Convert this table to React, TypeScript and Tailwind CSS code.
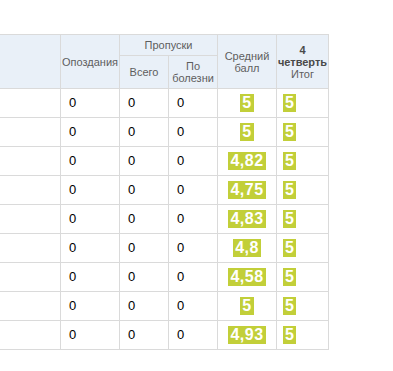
import React from "react";

const rows = [
  { avg: "5", fin: "5" },
  { avg: "5", fin: "5" },
  { avg: "4,82", fin: "5" },
  { avg: "4,75", fin: "5" },
  { avg: "4,83", fin: "5" },
  { avg: "4,8", fin: "5" },
  { avg: "4,58", fin: "5" },
  { avg: "5", fin: "5" },
  { avg: "4,93", fin: "5" },
];

const font = { fontFamily: '"Liberation Sans", Arial, sans-serif' };

function Badge({ v }: { v: string }) {
  return (
    <span className="inline-block bg-[#c2cf39] px-[2px] text-[16px] font-bold leading-[18px] tracking-[0.5px] text-white">
      {v}
    </span>
  );
}

export default function App() {
  const b = "border-[#dadada]";
  return (
    <div className="h-[371px] w-[393px] bg-white pt-[34px]" style={font}>
      <div className={`w-[329px] border-t ${b}`}>
        <div className="grid grid-cols-[61px_59px_49px_49px_59px_52px] grid-rows-[21px_33px] bg-[#e9f0f8] text-[11px] leading-[12px] text-[#5e5e5e]">
          <div className={`row-span-2 border-r border-b ${b}`}></div>
          <div className={`row-span-2 flex items-center justify-center border-r border-b ${b}`}>Опоздания</div>
          <div className={`col-span-2 flex items-center justify-center border-r border-b ${b}`}>Пропуски</div>
          <div className={`row-span-2 flex items-center justify-center border-r border-b text-center ${b}`}>
            Средний
            <br />
            балл
          </div>
          <div className={`row-span-2 flex flex-col items-center justify-center border-r border-b text-center ${b}`}>
            <span className="font-bold text-[#4a4a4a]">4</span>
            <span className="font-bold text-[#4a4a4a]">четверть</span>
            <span>Итог</span>
          </div>
          <div className={`flex items-center justify-center border-r border-b ${b}`}>Всего</div>
          <div className={`flex items-center justify-center border-r border-b text-center ${b}`}>
            По
            <br />
            болезни
          </div>
        </div>
        {rows.map((r, i) => (
          <div
            key={i}
            className="grid h-[29px] grid-cols-[61px_59px_49px_49px_59px_52px] text-[13px] text-black"
          >
            <div className={`border-r border-b ${b}`}></div>
            <div className={`flex items-center border-r border-b pl-[8px] ${b}`}>0</div>
            <div className={`flex items-center border-r border-b pl-[8px] ${b}`}>0</div>
            <div className={`flex items-center border-r border-b pl-[8px] ${b}`}>0</div>
            <div className={`flex items-center justify-center border-r border-b ${b}`}>
              <Badge v={r.avg} />
            </div>
            <div className={`flex items-center border-r border-b pl-[6px] ${b}`}>
              <Badge v={r.fin} />
            </div>
          </div>
        ))}
      </div>
    </div>
  );
}
